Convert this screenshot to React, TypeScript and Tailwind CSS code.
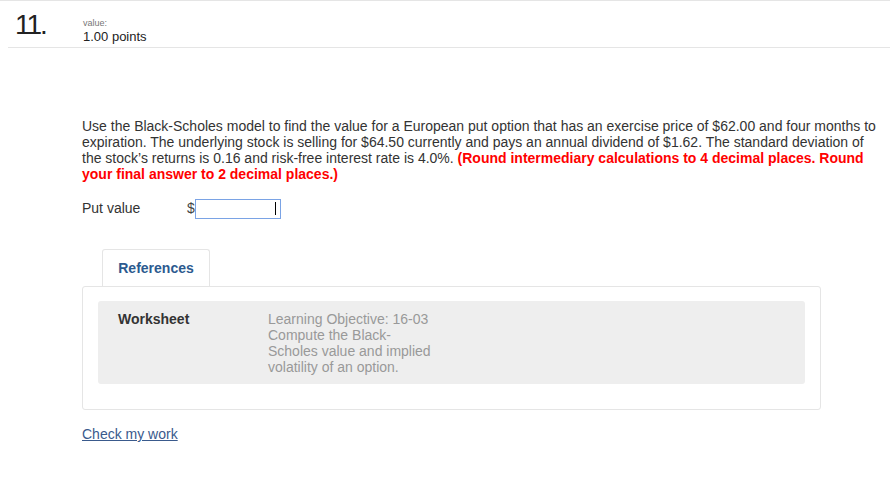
import React from 'react';

export default function App() {
  return (
    <div className="h-[492px] w-[890px] bg-white font-['Liberation_Sans',Arial,sans-serif] text-[#333]">
      <div className="h-[2px] border-t border-[#e5e5e5]" />
      <div className="ml-2 flex h-[46px] items-start border-b border-[#e5e5e5] pt-[8px]">
        <div className="w-[75px] pl-[7px] text-[28px] font-light leading-[30px] tracking-[-2px] text-[#222]">11.</div>
        <div className="flex flex-col pt-[7px]">
          <span className="text-[9px] leading-[12px] text-[#777]">value:</span>
          <span className="text-[13px] leading-[16px] text-[#222]">1.00 points</span>
        </div>
      </div>

      <div className="pl-[82px] pt-[70px]">
        <p className="w-[800px] text-[14px] leading-[16px] text-[#333]">
          Use the Black-Scholes model to find the value for a European put option that has an exercise price of $62.00 and four months to expiration. The underlying stock is selling for $64.50 currently and pays an annual dividend of $1.62. The standard deviation of the stock’s returns is 0.16 and risk-free interest rate is 4.0%.{' '}
          <span className="font-bold text-[#ff0000]">
            (Round intermediary calculations to 4 decimal places. Round your final answer to 2 decimal places.)
          </span>
        </p>

        <div className="mt-[16px] flex items-center text-[14px]">
          <span className="w-[105px]">Put value</span>
          <span className="text-[#444]">$</span>
          <div className="flex h-[20px] w-[86px] items-center justify-end border border-[#7aa3e5] pr-[4px]">
            <div className="h-[13px] w-[1px] bg-black" />
          </div>
        </div>

        <div className="mt-[30px] w-[739px]">
          <div className="ml-[20px] flex h-[38px] w-[108px] items-center justify-center rounded-t-[3px] border border-b-0 border-[#e5e5e5] bg-white text-[14px] font-bold text-[#2c5a8f]">
            References
          </div>
          <div className="-mt-px rounded-[3px] border border-[#e5e5e5] px-[15px] pb-[25px] pt-[14px]">
            <div className="flex rounded-[3px] bg-[#eeeeee] px-[20px] pb-[9px] pt-[10px] text-[14px] leading-[16px]">
              <span className="w-[150px] font-bold text-[#333]">Worksheet</span>
              <span className="w-[166px] text-[#999]">
                Learning Objective: 16-03 Compute the Black-Scholes value and implied volatility of an option.
              </span>
            </div>
          </div>
        </div>

        <a href="#" className="mt-[16px] inline-block text-[14px] leading-[16px] text-[#3a5a8c] underline">
          Check my work
        </a>
      </div>
    </div>
  );
}
